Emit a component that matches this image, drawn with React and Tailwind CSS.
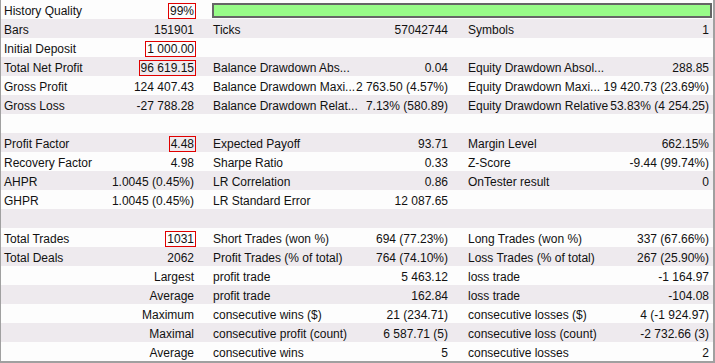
import React from "react";

const rows = [
  null,
  [["Bars", "151901"], ["Ticks", "57042744"], ["Symbols", "1"]],
  [["Initial Deposit", "1 000.00", true], ["", ""], ["", ""]],
  [["Total Net Profit", "96 619.15", true], ["Balance Drawdown Abs...", "0.04"], ["Equity Drawdown Absol...", "288.85"]],
  [["Gross Profit", "124 407.43"], ["Balance Drawdown Maxi...", "2 763.50 (4.57%)"], ["Equity Drawdown Maxi...", "19 420.73 (23.69%)"]],
  [["Gross Loss", "-27 788.28"], ["Balance Drawdown Relat...", "7.13% (580.89)"], ["Equity Drawdown Relative", "53.83% (4 254.25)"]],
  [["", ""], ["", ""], ["", ""]],
  [["Profit Factor", "4.48", true], ["Expected Payoff", "93.71"], ["Margin Level", "662.15%"]],
  [["Recovery Factor", "4.98"], ["Sharpe Ratio", "0.33"], ["Z-Score", "-9.44 (99.74%)"]],
  [["AHPR", "1.0045 (0.45%)"], ["LR Correlation", "0.86"], ["OnTester result", "0"]],
  [["GHPR", "1.0045 (0.45%)"], ["LR Standard Error", "12 087.65"], ["", ""]],
  [["", ""], ["", ""], ["", ""]],
  [["Total Trades", "1031", true], ["Short Trades (won %)", "694 (77.23%)"], ["Long Trades (won %)", "337 (67.66%)"]],
  [["Total Deals", "2062"], ["Profit Trades (% of total)", "764 (74.10%)"], ["Loss Trades (% of total)", "267 (25.90%)"]],
  [["", "Largest"], ["profit trade", "5 463.12"], ["loss trade", "-1 164.97"]],
  [["", "Average"], ["profit trade", "162.84"], ["loss trade", "-104.08"]],
  [["", "Maximum"], ["consecutive wins ($)", "21 (234.71)"], ["consecutive losses ($)", "4 (-1 924.97)"]],
  [["", "Maximal"], ["consecutive profit (count)", "6 587.71 (5)"], ["consecutive loss (count)", "-2 732.66 (3)"]],
  [["", "Average"], ["consecutive wins", "5"], ["consecutive losses", "2"]],
];

function Val({ v, boxed }) {
  if (boxed)
    return (
      <span className="outline outline-1 outline-[#e00000] -outline-offset-1 px-[2px] -mx-[2px]">{v}</span>
    );
  return <span>{v}</span>;
}

const pads = ["pl-[3px] pr-[18px]", "pl-[1px] pr-[19px]", "pl-[1px] pr-[4px]"];

export default function App() {
  return (
    <div
      className="w-[715px] h-[363px] bg-[#fdfdfd] border-l border-r-2 border-b-2 border-[#a0a0a0] text-[12px] text-[#111] overflow-hidden"
      style={{ fontFamily: '"Liberation Sans", Arial, sans-serif' }}
    >
      {rows.map((r, i) => (
        <div
          key={i}
          className={`grid grid-cols-[211px_255px_246px] h-[19px] whitespace-nowrap ${
            i % 2 === 1 ? "bg-[#eeeaee]" : "bg-[#fdfdfd]"
          }`}
        >
          {r === null ? (
            <>
              <div className={`flex justify-between pt-[3px] leading-[16px] ${pads[0]}`}>
                <span>History Quality</span>
                <Val v="99%" boxed />
              </div>
              <div className="col-span-2 pr-[1px]">
                <div className="mt-[3px] h-[15px] bg-[#98fc88] border-2 border-[#666666]" />
              </div>
            </>
          ) : (
            r.map((c, j) => (
              <div key={j} className={`flex justify-between pt-[3px] leading-[16px] ${pads[j]}`}>
                <span>{c[0]}</span>
                <Val v={c[1]} boxed={c[2]} />
              </div>
            ))
          )}
        </div>
      ))}
    </div>
  );
}
